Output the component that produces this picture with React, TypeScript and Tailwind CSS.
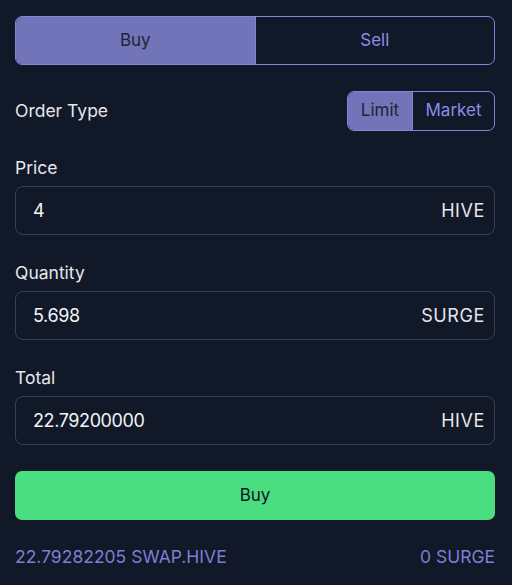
import React from "react";

function Field({ label, value, unit }: { label: string; value: string; unit: string }) {
  return (
    <div className="flex flex-col">
      <div className="h-[24px] leading-[24px] text-[17.5px] text-[#e5e7eb]">{label}</div>
      <div className="mt-[6px] h-[49px] rounded-[8px] border border-[#374151] flex items-center justify-between pl-[17px] pr-[10px]">
        <span className="text-[18px] tracking-[-0.4px] text-[#f3f4f6]">{value}</span>
        <span className="text-[18px] tracking-[0.6px] text-[#e5e7eb] mr-[-1px]">{unit}</span>
      </div>
    </div>
  );
}

export default function App() {
  return (
    <div
      className="w-[512px] h-[585px] bg-[#111827] pl-[15px] pr-[17px] pt-[16px]"
      style={{ fontFamily: "Inter, 'Noto Sans', sans-serif" }}
    >
      <div className="flex h-[49px] rounded-[7px] border border-[#8084dc] overflow-hidden">
        <div className="flex-1 bg-[#7174b8] flex items-center justify-center pt-[1px] text-[17px] text-[#1e2433]">Buy</div>
        <div className="flex-1 border-l border-[#8084dc] flex items-center justify-center pt-[1px] text-[17px] text-[#8a8ee6]">Sell</div>
      </div>

      <div className="mt-[26px] flex items-center justify-between h-[40px]">
        <div className="text-[17.5px] text-[#e5e7eb]">Order Type</div>
        <div className="flex h-[40px] rounded-[7px] border border-[#8084dc] overflow-hidden">
          <div className="w-[64px] bg-[#7174b8] flex items-center justify-center text-[17px] text-[#1e2433]">Limit</div>
          <div className="w-[82px] border-l border-[#8084dc] flex items-center justify-center text-[17px] text-[#8a8ee6]">Market</div>
        </div>
      </div>

      <div className="mt-[25px] flex flex-col gap-[26px]">
        <Field label="Price" value="4" unit="HIVE" />
        <Field label="Quantity" value="5.698" unit="SURGE" />
        <Field label="Total" value="22.79200000" unit="HIVE" />
      </div>

      <div className="mt-[26px] h-[49px] rounded-[7px] bg-[#4ade80] flex items-center justify-center text-[17px] text-[#111827]">
        Buy
      </div>

      <div className="mt-[25px] h-[24px] flex items-center justify-between text-[17.5px] text-[#7b7fd6]">
        <span>22.79282205 SWAP.HIVE</span>
        <span>0 SURGE</span>
      </div>
    </div>
  );
}
